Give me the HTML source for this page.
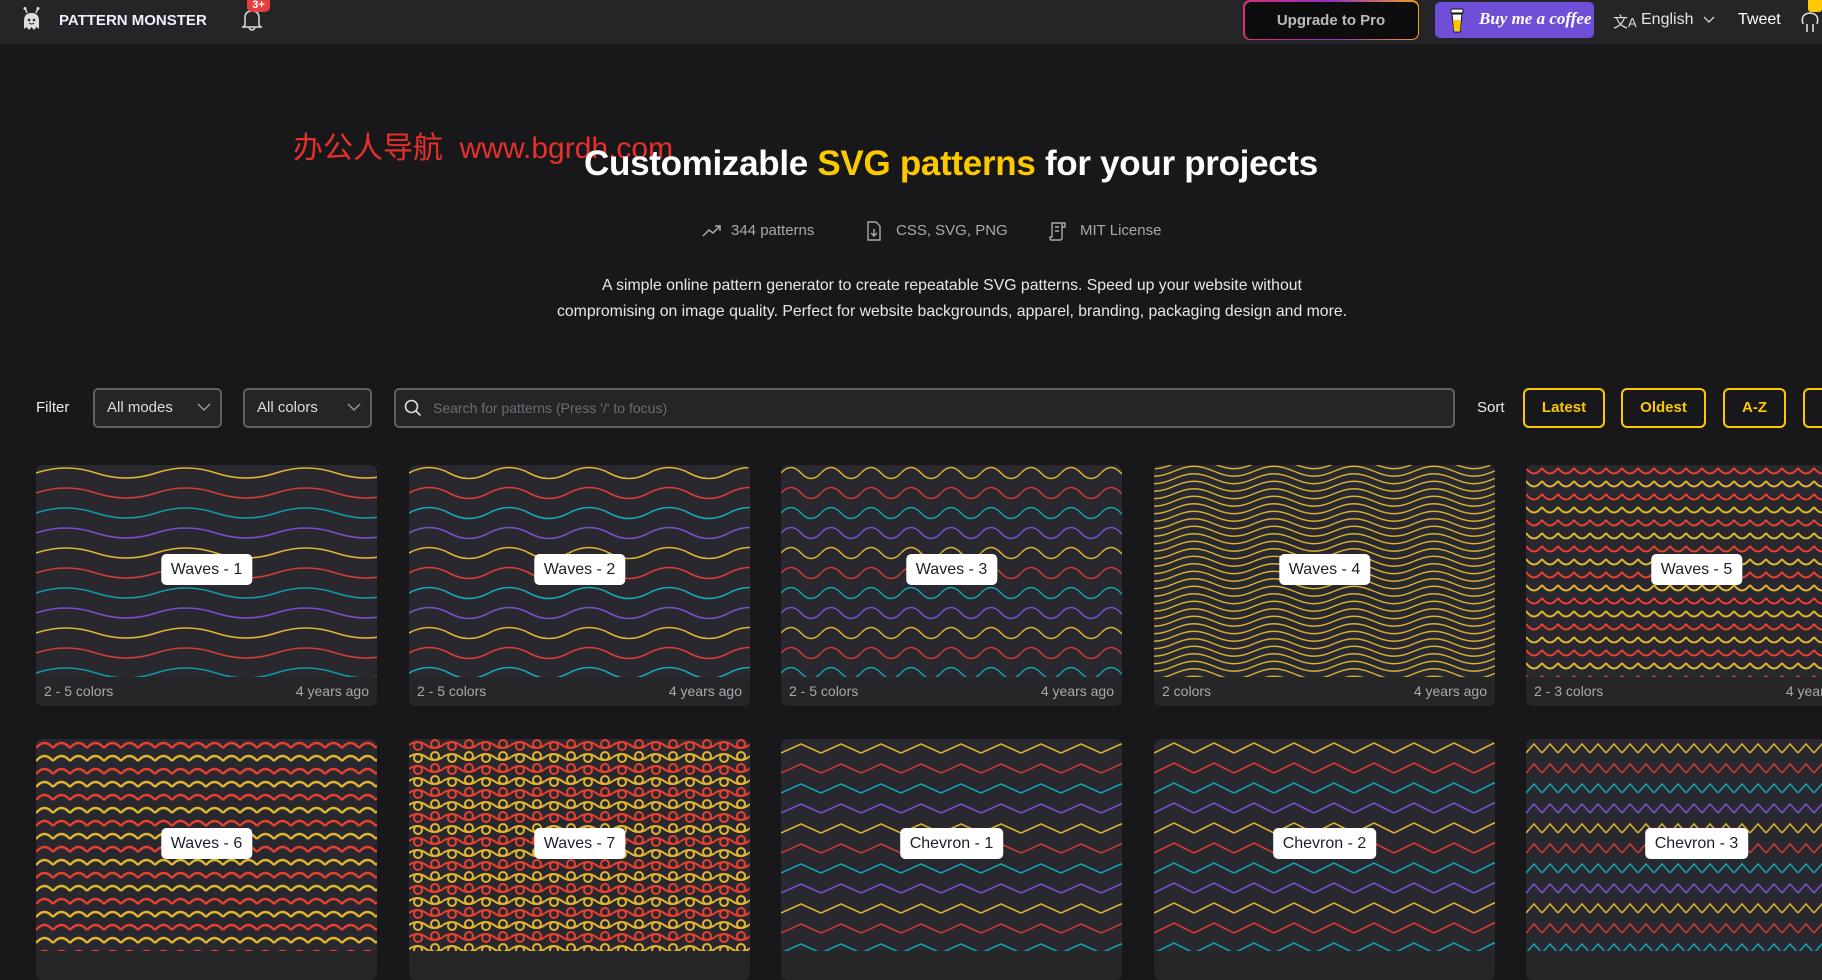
<!DOCTYPE html>
<html><head><meta charset="utf-8">
<style>
*{box-sizing:border-box;margin:0;padding:0}
html,body{width:1822px;height:840px;overflow:hidden;background:#18181b;font-family:"Liberation Sans","Noto Sans CJK SC",sans-serif;color:#fff}
.abs{position:absolute}
.nav{position:absolute;left:0;top:0;width:1822px;height:44px;background:#252528}
.sel{position:absolute;top:388px;height:40px;border:2px solid #5f5f66;border-radius:5px;background:#252528;color:#ddd;font-size:15px;line-height:36px;padding-left:12px}
.sbtn{position:absolute;top:388px;height:40px;border:2px solid #fcc800;border-radius:6px;color:#fcc800;font-weight:bold;font-size:15px;line-height:36px;text-align:center}
.card{position:absolute;width:341px;height:241px;border-radius:7px;background:#262528;overflow:hidden}
.card svg{position:absolute;left:0;top:0}
.foot{position:absolute;top:212px;left:0;right:0;height:29px;font-size:14px;color:#a8a8b0;line-height:29px;padding:0 8px}
.foot span{float:right}
.lbl{position:absolute;top:89px;left:50%;transform:translateX(-50%);height:31px;background:#fff;border-radius:5px;color:#1e1e2a;font-size:16px;line-height:31px;padding:0 10px;white-space:nowrap}
</style></head><body>
<svg width="0" height="0" style="position:absolute">
<defs>
<pattern id="w1" width="120" height="80" patternUnits="userSpaceOnUse">
<g fill="none" stroke-width="1.6">
<path d="M0,8 Q30,-2 60,8 T120,8" stroke="#e0b62e"/>
<path d="M0,28 Q30,18 60,28 T120,28" stroke="#d23c36"/>
<path d="M0,48 Q30,38 60,48 T120,48" stroke="#0f9aaa"/>
<path d="M0,68 Q30,58 60,68 T120,68" stroke="#7650cc"/>
</g></pattern>
<pattern id="w2" width="80" height="80" patternUnits="userSpaceOnUse">
<g fill="none" stroke-width="1.6">
<path d="M0,8 Q20,-3 40,8 T80,8" stroke="#e0b62e"/>
<path d="M0,28 Q20,17 40,28 T80,28" stroke="#e03a34"/>
<path d="M0,48 Q20,37 40,48 T80,48" stroke="#12aabb"/>
<path d="M0,68 Q20,57 40,68 T80,68" stroke="#7650cc"/>
</g></pattern>
<pattern id="w3" width="40" height="80" patternUnits="userSpaceOnUse">
<g fill="none" stroke-width="1.6">
<path d="M0,8 Q10,-3 20,8 T40,8" stroke="#d8b030"/>
<path d="M0,28 Q10,17 20,28 T40,28" stroke="#c83a36"/>
<path d="M0,48 Q10,37 20,48 T40,48" stroke="#10a0b0"/>
<path d="M0,68 Q10,57 20,68 T40,68" stroke="#7650cc"/>
</g></pattern>
<pattern id="w4" width="80" height="7.5" patternUnits="userSpaceOnUse">
<path d="M0,3.75 C15,3.75 25,-6.25 40,-6.25 S65,3.75 80,3.75 M0,11.25 C15,11.25 25,1.25 40,1.25 S65,11.25 80,11.25 M0,-3.75 C15,-3.75 25,-13.75 40,-13.75 S65,-3.75 80,-3.75" fill="none" stroke="#d8b030" stroke-width="1.4"/>
</pattern>
<pattern id="w5" width="16" height="26" patternUnits="userSpaceOnUse">
<path d="M0,3 Q8,14 16,3" fill="none" stroke="#e8402e" stroke-width="2"/>
<path d="M0,16 Q8,27 16,16" fill="none" stroke="#e0b62e" stroke-width="2"/>
</pattern>
<pattern id="w6" width="17" height="26" patternUnits="userSpaceOnUse">
<path d="M0,9 Q8.5,-1 17,9" fill="none" stroke="#e8402e" stroke-width="2.4"/>
<path d="M0,22 Q8.5,12 17,22" fill="none" stroke="#e0b62e" stroke-width="2.4"/>
</pattern>
<pattern id="w7" width="34" height="24" patternUnits="userSpaceOnUse">
<g fill="none" stroke-width="2">
<path d="M0,6 Q8.5,0 17,6 T34,6" stroke="#e8402e"/>
<circle cx="9" cy="7" r="4" stroke="#e8402e"/>
<circle cx="26" cy="5" r="4" stroke="#e8402e"/>
<path d="M0,18 Q8.5,12 17,18 T34,18" stroke="#e0b62e"/>
<circle cx="9" cy="19" r="4" stroke="#e0b62e"/>
<circle cx="26" cy="17" r="4" stroke="#e0b62e"/>
</g></pattern>
<pattern id="c1" width="40" height="80" patternUnits="userSpaceOnUse">
<g fill="none" stroke-width="1.6">
<path d="M0,14 L20,5 L40,14" stroke="#d8b030"/>
<path d="M0,34 L20,25 L40,34" stroke="#c83a36"/>
<path d="M0,54 L20,45 L40,54" stroke="#10a0b0"/>
<path d="M0,74 L20,65 L40,74" stroke="#7650cc"/>
</g></pattern>
<pattern id="c2" width="40" height="80" patternUnits="userSpaceOnUse">
<g fill="none" stroke-width="1.6">
<path d="M0,14 L20,4 L40,14" stroke="#d8b030"/>
<path d="M0,34 L20,24 L40,34" stroke="#d83a30"/>
<path d="M0,54 L20,44 L40,54" stroke="#10a0b0"/>
<path d="M0,74 L20,64 L40,74" stroke="#7650cc"/>
</g></pattern>
<pattern id="c3" width="16" height="80" patternUnits="userSpaceOnUse">
<g fill="none" stroke-width="1.6">
<path d="M0,14 L8,5 L16,14" stroke="#d8b030"/>
<path d="M0,34 L8,25 L16,34" stroke="#c83a36"/>
<path d="M0,54 L8,45 L16,54" stroke="#10a0b0"/>
<path d="M0,74 L8,65 L16,74" stroke="#7650cc"/>
</g></pattern>
</defs></svg>

<div class="nav">
<svg class="abs" style="left:21px;top:7px" width="21" height="25" viewBox="0 0 21 25"><line x1="6" y1="6" x2="4" y2="1" stroke="#ddd" stroke-width="1.5"/><line x1="15" y1="6" x2="17" y2="1" stroke="#ddd" stroke-width="1.5"/><circle cx="4" cy="1.5" r="1.5" fill="#ddd"/><circle cx="17" cy="1.5" r="1.5" fill="#ddd"/><path d="M3,14 Q3,6 10.5,6 Q18,6 18,14 L18,22 L15.5,20 L13,23 L10.5,20 L8,23 L5.5,20 L3,22Z" fill="#ddd"/><circle cx="8" cy="13" r="1.3" fill="#252528"/><circle cx="13" cy="13" r="1.3" fill="#252528"/><path d="M8,16 Q10.5,18 13,16" stroke="#252528" fill="none"/></svg>
<div class="abs" style="left:59px;top:12px;font-size:15px;font-weight:bold;color:#eef">PATTERN MONSTER</div>
<svg class="abs" style="left:241px;top:8px" width="22" height="24" viewBox="0 0 22 24"><path d="M4,17 L4,10 Q4,3 11,3 Q18,3 18,10 L18,17 L20,19 L2,19Z M8,20 Q11,24 14,20" fill="none" stroke="#ddd" stroke-width="1.5"/></svg>
<div class="abs" style="left:247px;top:0;width:23px;height:12px;background:#e53e3e;border-radius:0 0 5px 5px;font-size:11px;font-weight:bold;text-align:center;line-height:11px">3+</div>
<div class="abs" style="left:1243px;top:0;width:176px;height:40px;border-radius:7px;background:linear-gradient(90deg,#d8307a,#9030c0 50%,#f0a020);padding:1.5px"><div style="width:100%;height:100%;background:#0d0d0e;border-radius:6px;color:#bbb;font-weight:bold;font-size:15px;text-align:center;line-height:37px">Upgrade to Pro</div></div>
<div class="abs" style="left:1435px;top:2px;width:159px;height:36px;border-radius:5px;background:#6f4fd8"></div>
<svg class="abs" style="left:1450px;top:8px" width="14" height="25" viewBox="0 0 14 25"><rect x="1" y="1" width="12" height="4" rx="1" fill="#fff" stroke="#111"/><path d="M2,6 L12,6 L10,24 L4,24Z" fill="#fff" stroke="#111"/><path d="M3,12 L11,12 L10,23 L4,23Z" fill="#fcc800"/></svg>
<div class="abs" style="left:1479px;top:9px;font-family:'Liberation Serif',serif;font-style:italic;font-weight:bold;font-size:17px;color:#fff">Buy me a coffee</div>
<div class="abs" style="left:1613px;top:11px;font-size:15px;color:#ddd">文<span style="font-size:13px">A</span></div>
<div class="abs" style="left:1641px;top:11px;font-size:16px;color:#e5e5e5">English</div>
<svg class="abs" style="left:1703px;top:15px" width="12" height="10"><path d="M1,2 L6,7 L11,2" fill="none" stroke="#ccc" stroke-width="1.4"/></svg>
<div class="abs" style="left:1738px;top:11px;font-size:16px;color:#fff">Tweet</div>
<svg class="abs" style="left:1799px;top:8px" width="23" height="26"><path d="M4,16 Q1,6 11,5 Q21,6 18,16 M8,16 L8,24 M14,16 L14,24" fill="none" stroke="#ddd" stroke-width="1.6"/></svg>
<div class="abs" style="left:1808px;top:0;width:14px;height:12px;background:#fcc800;border-radius:0 0 3px 3px"></div>
</div>

<div class="abs" style="left:293px;top:123px;font-size:30px;color:#e8302a;white-space:nowrap">办公人导航&nbsp; www.bgrdh.com</div>
<div class="abs" style="left:0;width:1902px;top:144px;text-align:center;font-size:35px;font-weight:bold;color:#fff;letter-spacing:-0.3px">Customizable <span style="color:#fcc800">SVG patterns</span> for your projects</div>

<svg class="abs" style="left:702px;top:224px" width="20" height="14"><path d="M1,12 L7,6 L11,9 L18,2 M13,2 L18,2 L18,7" fill="none" stroke="#aaa" stroke-width="1.5"/></svg>
<div class="abs" style="left:731px;top:222px;font-size:15px;color:#a8a8b0">344 patterns</div>
<svg class="abs" style="left:867px;top:221px" width="14" height="20"><path d="M1,1 L9,1 L13,5 L13,19 L1,19Z M7,8 L7,15 M4,12 L7,15 L10,12" fill="none" stroke="#aaa" stroke-width="1.4"/></svg>
<div class="abs" style="left:896px;top:222px;font-size:15px;color:#a8a8b0">CSS, SVG, PNG</div>
<svg class="abs" style="left:1049px;top:221px" width="17" height="20"><path d="M3,16 L3,2 L13,2 L13,17 Q13,19 11,19 L2,19 Q1,19 1,17 L1,16 Z M6,6 L10,6 M6,10 L10,10 M13,2 L16,2 L16,6 L13,6" fill="none" stroke="#aaa" stroke-width="1.4"/></svg>
<div class="abs" style="left:1080px;top:222px;font-size:15px;color:#a8a8b0">MIT License</div>

<div class="abs" style="left:0;width:1904px;top:273px;text-align:center;font-size:15.8px;line-height:26px;color:#e8e8ea">A simple online pattern generator to create repeatable SVG patterns. Speed up your website without<br>compromising on image quality. Perfect for website backgrounds, apparel, branding, packaging design and more.</div>

<div class="abs" style="left:36px;top:399px;font-size:15px;color:#eee">Filter</div>
<div class="sel" style="left:93px;width:129px">All modes</div>
<svg class="abs" style="left:197px;top:402px" width="14" height="10"><path d="M1,2 L7,8 L13,2" fill="none" stroke="#999" stroke-width="1.4"/></svg>
<div class="sel" style="left:243px;width:129px">All colors</div>
<svg class="abs" style="left:347px;top:402px" width="14" height="10"><path d="M1,2 L7,8 L13,2" fill="none" stroke="#999" stroke-width="1.4"/></svg>
<div class="sel" style="left:394px;width:1061px;padding-left:37px;color:#6c6c75;font-size:14px">Search for patterns (Press '/' to focus)</div>
<svg class="abs" style="left:404px;top:399px" width="18" height="18"><circle cx="7.5" cy="7.5" r="6" fill="none" stroke="#ddd" stroke-width="1.6"/><path d="M12,12 L16.5,16.5" stroke="#ddd" stroke-width="1.6"/></svg>
<div class="abs" style="left:1477px;top:399px;font-size:15px;color:#eee">Sort</div>
<div class="sbtn" style="left:1523px;width:82px">Latest</div>
<div class="sbtn" style="left:1621px;width:85px">Oldest</div>
<div class="sbtn" style="left:1723px;width:63px">A-Z</div>
<div class="sbtn" style="left:1803px;width:60px"></div>

<div class="card" style="left:36px;top:465px"><svg width="341" height="212"><rect width="341" height="212" fill="#29282f"/><rect width="341" height="212" fill="url(#w1)"/></svg><div class="lbl">Waves - 1</div><div class="foot">2 - 5 colors<span>4 years ago</span></div></div>
<div class="card" style="left:409px;top:465px"><svg width="341" height="212"><rect width="341" height="212" fill="#29282f"/><rect width="341" height="212" fill="url(#w2)"/></svg><div class="lbl">Waves - 2</div><div class="foot">2 - 5 colors<span>4 years ago</span></div></div>
<div class="card" style="left:781px;top:465px"><svg width="341" height="212"><rect width="341" height="212" fill="#29282f"/><rect width="341" height="212" fill="url(#w3)"/></svg><div class="lbl">Waves - 3</div><div class="foot">2 - 5 colors<span>4 years ago</span></div></div>
<div class="card" style="left:1154px;top:465px"><svg width="341" height="212"><rect width="341" height="212" fill="#29282f"/><rect width="341" height="212" fill="url(#w4)"/></svg><div class="lbl">Waves - 4</div><div class="foot">2 colors<span>4 years ago</span></div></div>
<div class="card" style="left:1526px;top:465px"><svg width="341" height="212"><rect width="341" height="212" fill="#29282f"/><rect width="341" height="212" fill="url(#w5)"/></svg><div class="lbl">Waves - 5</div><div class="foot">2 - 3 colors<span>4 years ago</span></div></div>

<div class="card" style="left:36px;top:739px"><svg width="341" height="212"><rect width="341" height="212" fill="#29282f"/><rect width="341" height="212" fill="url(#w6)"/></svg><div class="lbl">Waves - 6</div></div>
<div class="card" style="left:409px;top:739px"><svg width="341" height="212"><rect width="341" height="212" fill="#29282f"/><rect width="341" height="212" fill="url(#w7)"/></svg><div class="lbl">Waves - 7</div></div>
<div class="card" style="left:781px;top:739px"><svg width="341" height="212"><rect width="341" height="212" fill="#29282f"/><rect width="341" height="212" fill="url(#c1)"/></svg><div class="lbl">Chevron - 1</div></div>
<div class="card" style="left:1154px;top:739px"><svg width="341" height="212"><rect width="341" height="212" fill="#29282f"/><rect width="341" height="212" fill="url(#c2)"/></svg><div class="lbl">Chevron - 2</div></div>
<div class="card" style="left:1526px;top:739px"><svg width="341" height="212"><rect width="341" height="212" fill="#29282f"/><rect width="341" height="212" fill="url(#c3)"/></svg><div class="lbl">Chevron - 3</div></div>
</body></html>
